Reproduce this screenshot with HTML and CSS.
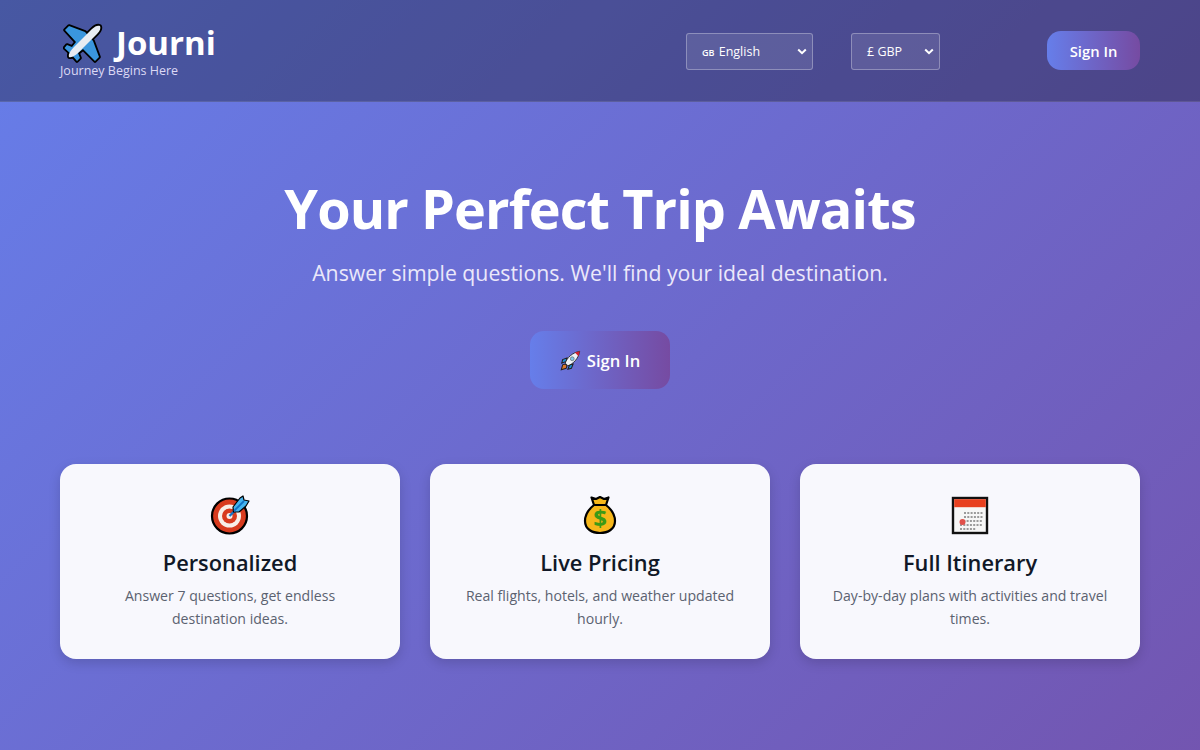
FILE: index.html
```html
<!DOCTYPE html>
<html lang="en">
<head>
<meta charset="utf-8">
<title>Journi</title>
<link rel="stylesheet" href="styles.css">
</head>
<body>
<header class="topbar">
  <div class="brand">
    <div class="brand-main">
      <svg class="plane" viewBox="0 0 40 40" aria-hidden="true">
        <g stroke="#000" stroke-width="3.6" stroke-linejoin="round">
          <path d="M22 9 6 3 2 7 13 19 9 24 4 22 1.500 25 8 31 14 38 17 35 15 30 20 26 32 38 36 34 30 18Z" fill="#3a96dd"/>
          <path d="M6 34C5 31 8 27 11 24L29 6C32 3 35 2 37 3 38 5 37 8 34 11L16 29C13 32 9 35 6 34Z" fill="#e8ecf2"/>
        </g>
        <path d="M22 9 6 3 2 7 13 19 9 24 4 22 1.500 25 8 31 14 38 17 35 15 30 20 26 32 38 36 34 30 18Z" fill="#3a96dd"/>
        <path d="M6 34C5 31 8 27 11 24L29 6C32 3 35 2 37 3 38 5 37 8 34 11L16 29C13 32 9 35 6 34Z" fill="#e8ecf2"/>
      </svg>
      <span class="brand-name">Journi</span>
    </div>
    <div class="tagline">Journey Begins Here</div>
  </div>
  <div class="controls">
    <div class="picker picker-lang"><span><small>GB</small> English</span>
      <svg class="chev" viewBox="0 0 10 7" aria-hidden="true"><path d="M1.2 1.500 5 5.200 8.800 1.500" fill="none" stroke="#fff" stroke-width="2"/></svg>
    </div>
    <div class="picker picker-cur"><span>£ GBP</span>
      <svg class="chev" viewBox="0 0 10 7" aria-hidden="true"><path d="M1.2 1.500 5 5.200 8.800 1.500" fill="none" stroke="#fff" stroke-width="2"/></svg>
    </div>
    <button class="btn btn-top">Sign In</button>
  </div>
</header>

<main class="page">
  <section class="hero">
    <h1>Your Perfect Trip Awaits</h1>
    <p class="sub">Answer simple questions. We'll find your ideal destination.</p>
    <button class="btn btn-cta">
      <svg class="rocket" viewBox="0 0 24 24" aria-hidden="true">
        <path d="M3 17 1.500 22.500 7 21 8 18 6 16Z" fill="#e0782a" stroke="#222" stroke-width="1.200"/>
        <path d="M8 9 3 11 2 15 7 13ZM15 16 13 21 9 22 11 17Z" fill="#1f8fd6" stroke="#222" stroke-width="1.200"/>
        <path d="M6 15C8 9 14 3 22.500 1.500 21 10 15 16 9 18Z" fill="#f0f4f8" stroke="#222" stroke-width="1"/>
        <path d="M17 2.800 22.500 1.500 21.200 7Z" fill="#d1202f"/>
        <circle cx="14" cy="10" r="2.200" fill="#7cc8ee" stroke="#666" stroke-width=".8"/>
      </svg>
      Sign In
    </button>
  </section>

  <section class="cards">
    <article class="card">
      <svg class="icon" viewBox="0 0 40 40" aria-hidden="true">
        <circle cx="19.500" cy="21" r="17.500" fill="#d83b1e" stroke="#000" stroke-width="2.200"/>
        <circle cx="19.500" cy="21" r="11.500" fill="#f8efe8"/>
        <circle cx="19.500" cy="21" r="7.500" fill="#d83b1e"/>
        <circle cx="19.500" cy="21" r="3" fill="#f8efe8"/>
        <path d="M19.500 21 28 12.500" stroke="#1272c4" stroke-width="2.400"/>
        <path d="M23 12 30 3 33 1 34 5 39 6 36 11 29 17 23.500 17Z" fill="#45b4ee" stroke="#000" stroke-width="1.200" stroke-linejoin="round"/>
        <path d="M24 16 34 6" stroke="#1272c4" stroke-width="1.800"/>
      </svg>
      <h3>Personalized</h3>
      <p>Answer 7 questions, get endless destination ideas.</p>
    </article>
    <article class="card">
      <svg class="icon" viewBox="0 0 40 40" aria-hidden="true">
        <path d="M11.500 2.500 16 4 20 2 24 4 28.500 2.500 26 10C31 14 35 20 35 26 35 34 28 38 20 38 12 38 5 34 5 26 5 20 9 14 14 10Z" fill="#f6b71a" stroke="#000" stroke-width="2.200" stroke-linejoin="round"/>
        <path d="M14 10H26" stroke="#000" stroke-width="2"/>
        <text class="dollar" x="20" y="32" text-anchor="middle">$</text>
      </svg>
      <h3>Live Pricing</h3>
      <p>Real flights, hotels, and weather updated hourly.</p>
    </article>
    <article class="card">
      <svg class="icon" viewBox="0 0 40 40" aria-hidden="true">
        <rect x="3" y="3" width="34" height="35" fill="#f6f6f6" stroke="#111" stroke-width="2.400"/>
        <rect x="4.200" y="4.200" width="31.600" height="8" fill="#e8401f"/>
        <path d="M14 18H33M14 22H33M10 26H33M10 30H33M10 34H26" stroke="#9a9a9a" stroke-width="2.200" stroke-dasharray="2 1.300"/>
        <circle cx="12.500" cy="27" r="3" fill="#e0504a"/>
      </svg>
      <h3>Full Itinerary</h3>
      <p>Day-by-day plans with activities and travel times.</p>
    </article>
  </section>
</main>
</body>
</html>
```
FILE: styles.css
```css
* { box-sizing: border-box; }
html { height: 100%; overflow: hidden; }
body {
  margin: 0;
  height: 750px;
  font-family: "Open Sans", "Noto Sans", sans-serif;
  background: linear-gradient(135deg, #667eea 0%, #764ba2 125%);
  color: #fff;
}
.topbar {
  height: 102px;
  padding: 0 60px;
  display: flex;
  align-items: center;
  justify-content: space-between;
  background: rgba(0, 0, 0, 0.3);
  border-bottom: 1px solid rgba(255, 255, 255, 0.1);
}
.brand { margin-top: -1px; }
.brand-main { display: flex; align-items: center; gap: 13px; padding-left: 3px; height: 40px; }
.plane { width: 40px; height: 40px; }
.brand-name { font-size: 33px; font-weight: 700; line-height: 40px; }
.tagline { font-size: 12.5px; line-height: 15px; color: #dcd9f5; }
.controls { display: flex; align-items: center; }
.picker {
  height: 37px;
  margin-top: 1px;
  display: flex;
  align-items: center;
  justify-content: space-between;
  font-size: 12.5px;
  background: rgba(255, 255, 255, 0.1);
  border: 1px solid rgba(255, 255, 255, 0.3);
  border-radius: 3px;
  padding: 0 5px 0 15px;
}
.picker small { font-size: 9px; font-weight: 600; margin-right: 1px; }
.picker-lang { width: 127px; margin-right: 38px; }
.picker-cur { width: 89px; margin-right: 107px; }
.chev { width: 10px; height: 7px; }
.btn {
  font-family: inherit;
  color: #fff;
  font-weight: 600;
  border: 0;
  background: linear-gradient(90deg, #667eea, #764ba2);
  display: flex;
  align-items: center;
  justify-content: center;
}
.btn-top { width: 93px; height: 39px; border-radius: 14px; font-size: 14.8px; }
.page { padding: 0 60px; }
.hero { display: flex; flex-direction: column; align-items: center; padding-top: 69px; }
h1 { margin: 0; font-size: 54px; line-height: 74px; font-weight: 700; letter-spacing: -0.9px; }
.sub { margin: 13px 0 0; font-size: 21.25px; line-height: 30px; color: #ebe8fa; }
.btn-cta { width: 140px; height: 58px; margin-top: 43px; border-radius: 14px; font-size: 16.6px; gap: 6px; }
.rocket { width: 21px; height: 21px; }
.cards { display: grid; grid-template-columns: repeat(3, 1fr); gap: 30px; margin-top: 75px; }
.card {
  height: 195px;
  background: #f8f8fd;
  border-radius: 16px;
  box-shadow: 0 4px 12px rgba(0, 0, 0, 0.15);
  padding: 31px 30px 0;
  text-align: center;
}
.icon { width: 40px; height: 40px; display: block; margin: 0 auto; }
.card h3 { margin: 12px 0 0; font-size: 21.8px; line-height: 32px; font-weight: 600; color: #111827; }
.card p { margin: 6px 0 0; font-size: 14.1px; line-height: 22.5px; color: #5b6270; }
.dollar { font-size: 24px; font-weight: 700; fill: #3c9a16; font-family: "Open Sans", sans-serif; }
```
